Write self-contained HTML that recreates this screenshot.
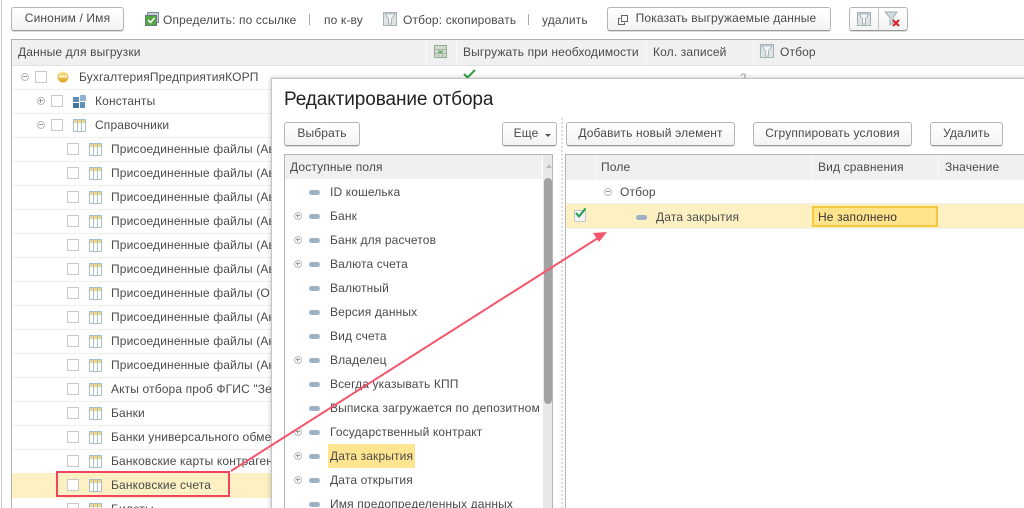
<!DOCTYPE html>
<html lang="ru"><head><meta charset="utf-8"><title>Редактирование отбора</title>
<style>
html,body{margin:0;padding:0;background:#fff}
#p{position:relative;width:1024px;height:508px;overflow:hidden;background:#fff;font:12px/16px "Liberation Sans",sans-serif;letter-spacing:.14px;color:#4a4a4a;filter:blur(.3px)}
#p div,#p svg{position:absolute}
.t{white-space:nowrap;overflow:hidden}
.b{box-sizing:border-box;border:1px solid #b5b5b5;border-bottom:1px solid #989898;border-radius:3px;background:linear-gradient(#fff,#f3f3f3);text-align:center;height:24px;line-height:21px;white-space:nowrap;box-shadow:0 1px 0 #ddd}
.l{height:1px;background:#eeeeee}
.h{background:#f0f0f0}
.v{width:1px;background:#fafafa}
.c{box-sizing:border-box;width:12px;height:12px;border:1px solid #c8c8c8;background:#fff}
.e{box-sizing:border-box;width:8px;height:8px;border:1px solid #bbb;border-radius:50%;background:#fff;text-align:center}
.e.m:after{content:"";position:absolute;left:1px;top:2px;width:4px;height:1px;background:#999}
.e.pl:after{content:"";position:absolute;left:1px;top:2px;width:4px;height:1px;background:#999}
.e.pl:before{content:"";position:absolute;left:2px;top:1px;width:1px;height:4px;background:#999}
.d{width:11px;height:5px;margin-left:-1px;border-radius:2.500px;background:#9db2c5}
</style></head><body><div id="p">
<svg width="0" height="0" style="left:0;top:0"><defs>
<g id="tb"><rect x=".5" y=".5" width="12" height="12" fill="#fff" stroke="#a9bcc7"/><rect x="1" y="1" width="11" height="3" fill="#ecd98a"/><path d="M4.500 1v11M8.500 1v11" stroke="#a9bcc7"/></g>
<g id="fl"><rect x=".5" y=".5" width="13" height="13" fill="#dfe4e6" stroke="#a5b0b5"/><path d="M2 2h10L8.500 7v5h-3V7z" fill="#f4f4f4" stroke="#a9b5ba"/></g>
</defs></svg>

<div style="left:1px;top:0;width:1px;height:508px;background:#c8c8c8"></div>

<!-- toolbar -->
<div class="b" style="left:11px;top:7px;width:113px">Синоним / Имя</div>
<svg style="left:145px;top:12px" width="14" height="14"><rect x="2.500" y=".5" width="11" height="10" fill="#c3ced1" stroke="#7f9298"/><rect x=".5" y="3.500" width="11" height="10" fill="#57a844" stroke="#61797f"/><path d="M3 8l2.500 2.500L9.500 6" fill="none" stroke="#fff" stroke-width="1.500"/></svg>
<div class="t" style="left:163px;top:12px">Определить: по ссылке</div>
<div style="left:309px;top:14px;width:1px;height:11px;background:#a8a8a8"></div>
<div class="t" style="left:324px;top:12px">по к-ву</div>
<svg style="left:383px;top:12px" width="14" height="14"><use href="#fl"/></svg>
<div class="t" style="left:403px;top:12px">Отбор: скопировать</div>
<div style="left:528px;top:14px;width:1px;height:11px;background:#a8a8a8"></div>
<div class="t" style="left:542px;top:12px">удалить</div>
<div class="b" style="left:607px;top:7px;width:224px;padding-left:14px">Показать выгружаемые данные</div>
<svg style="left:617px;top:14px" width="12" height="12"><rect x="4.500" y="1.500" width="6" height="6" fill="none" stroke="#666"/><path d="M3.500 4.500h-2v6h6v-2" fill="none" stroke="#666"/></svg>
<div class="b" style="left:849px;top:7px;width:59px"></div>
<div style="left:878px;top:8px;width:1px;height:22px;background:#c4c4c4"></div>
<svg style="left:857px;top:12px" width="14" height="14"><use href="#fl"/></svg>
<svg style="left:884px;top:11px" width="18" height="16"><path d="M1 1h12L9 6.500V12L6 14V6.500z" fill="#d5dde0" stroke="#9fadb3"/><path d="M9 9l6 6M15 9l-6 6" stroke="#d9262e" stroke-width="2.200"/></svg>

<!-- main table -->
<div style="left:11px;top:39px;width:1013px;height:1px;background:#b0b0b0"></div>
<div style="left:11px;top:39px;width:1px;height:469px;background:#b0b0b0"></div>
<div class="h" style="left:12px;top:40px;width:1012px;height:25px"></div>
<div style="left:12px;top:65px;width:1012px;height:1px;background:#e2e2e2"></div>
<div class="v" style="left:426px;top:40px;height:25px"></div>
<div class="v" style="left:456px;top:40px;height:25px"></div>
<div class="v" style="left:646px;top:40px;height:25px"></div>
<div class="v" style="left:753px;top:40px;height:25px"></div>
<div class="t" style="left:18px;top:44px">Данные для выгрузки</div>
<svg style="left:434px;top:45px" width="13" height="13"><rect x=".5" y=".5" width="12" height="12" fill="#cfdccb" stroke="#9aa89a"/><path d="M1 4.500h11M1 8.500h11M4.500 4v8M8.500 4v8" stroke="#a9b5a8"/><rect x="5" y="6" width="3" height="2" fill="#5aa85a"/></svg>
<div class="t" style="left:463px;top:44px">Выгружать при необходимости</div>
<div class="t" style="left:653px;top:44px">Кол. записей</div>
<svg style="left:760px;top:44px" width="14" height="14"><use href="#fl"/></svg>
<div class="t" style="left:780px;top:44px">Отбор</div>
<div class="t" style="left:740px;top:70px;color:#999">2</div>

<!-- rows -->
<div class="l" style="left:12px;top:89px;width:260px"></div>
<div class="l" style="left:12px;top:113px;width:260px"></div>
<div class="l" style="left:12px;top:137px;width:260px"></div>
<div class="l" style="left:12px;top:161px;width:260px"></div>
<div class="l" style="left:12px;top:185px;width:260px"></div>
<div class="l" style="left:12px;top:209px;width:260px"></div>
<div class="l" style="left:12px;top:233px;width:260px"></div>
<div class="l" style="left:12px;top:257px;width:260px"></div>
<div class="l" style="left:12px;top:281px;width:260px"></div>
<div class="l" style="left:12px;top:305px;width:260px"></div>
<div class="l" style="left:12px;top:329px;width:260px"></div>
<div class="l" style="left:12px;top:353px;width:260px"></div>
<div class="l" style="left:12px;top:377px;width:260px"></div>
<div class="l" style="left:12px;top:401px;width:260px"></div>
<div class="l" style="left:12px;top:425px;width:260px"></div>
<div class="l" style="left:12px;top:449px;width:260px"></div>
<div style="left:12px;top:473px;width:260px;height:25px;background:#fdf1c4"></div>

<div class="e m" style="left:21px;top:73px"></div>
<div class="c" style="left:35px;top:71px"></div>
<svg style="left:57px;top:71px" width="12" height="12"><defs><linearGradient id="g" x1="0" y1="0" x2="0" y2="1"><stop offset="0" stop-color="#f8e89a"/><stop offset="1" stop-color="#d9a31c"/></linearGradient></defs><circle cx="6" cy="6" r="5.500" fill="url(#g)"/><rect x="2" y="4.500" width="8" height="2" fill="#fbf3c6"/></svg>
<div class="t" style="left:79px;top:69px">БухгалтерияПредприятияКОРП</div>

<div class="e pl" style="left:37px;top:97px"></div>
<div class="c" style="left:51px;top:95px"></div>
<svg style="left:73px;top:95px" width="13" height="13"><rect x="0" y="2" width="6" height="5" fill="#5d8fb8"/><rect x="7" y="0" width="6" height="6" fill="#8fb5d2"/><rect x="0" y="8" width="6" height="5" fill="#3f75a3"/><rect x="7" y="7" width="5" height="6" fill="#5d8fb8"/></svg>
<div class="t" style="left:95px;top:93px">Константы</div>

<div class="e m" style="left:37px;top:121px"></div>
<div class="c" style="left:51px;top:119px"></div>
<svg style="left:73px;top:119px" width="13" height="13"><use href="#tb"/></svg>
<div class="t" style="left:95px;top:117px">Справочники</div>

<div class="c" style="left:67px;top:143px"></div><svg style="left:89px;top:143px" width="13" height="13"><use href="#tb"/></svg><div class="t" style="left:111px;top:141px;width:160px">Присоединенные файлы (Ав</div>
<div class="c" style="left:67px;top:167px"></div><svg style="left:89px;top:167px" width="13" height="13"><use href="#tb"/></svg><div class="t" style="left:111px;top:165px;width:160px">Присоединенные файлы (Ав</div>
<div class="c" style="left:67px;top:191px"></div><svg style="left:89px;top:191px" width="13" height="13"><use href="#tb"/></svg><div class="t" style="left:111px;top:189px;width:160px">Присоединенные файлы (Ав</div>
<div class="c" style="left:67px;top:215px"></div><svg style="left:89px;top:215px" width="13" height="13"><use href="#tb"/></svg><div class="t" style="left:111px;top:213px;width:160px">Присоединенные файлы (Ав</div>
<div class="c" style="left:67px;top:239px"></div><svg style="left:89px;top:239px" width="13" height="13"><use href="#tb"/></svg><div class="t" style="left:111px;top:237px;width:160px">Присоединенные файлы (Ав</div>
<div class="c" style="left:67px;top:263px"></div><svg style="left:89px;top:263px" width="13" height="13"><use href="#tb"/></svg><div class="t" style="left:111px;top:261px;width:160px">Присоединенные файлы (Ав</div>
<div class="c" style="left:67px;top:287px"></div><svg style="left:89px;top:287px" width="13" height="13"><use href="#tb"/></svg><div class="t" style="left:111px;top:285px;width:160px">Присоединенные файлы (О</div>
<div class="c" style="left:67px;top:311px"></div><svg style="left:89px;top:311px" width="13" height="13"><use href="#tb"/></svg><div class="t" style="left:111px;top:309px;width:160px">Присоединенные файлы (Ак</div>
<div class="c" style="left:67px;top:335px"></div><svg style="left:89px;top:335px" width="13" height="13"><use href="#tb"/></svg><div class="t" style="left:111px;top:333px;width:160px">Присоединенные файлы (Ак</div>
<div class="c" style="left:67px;top:359px"></div><svg style="left:89px;top:359px" width="13" height="13"><use href="#tb"/></svg><div class="t" style="left:111px;top:357px;width:160px">Присоединенные файлы (Ак</div>
<div class="c" style="left:67px;top:383px"></div><svg style="left:89px;top:383px" width="13" height="13"><use href="#tb"/></svg><div class="t" style="left:111px;top:381px;width:160px">Акты отбора проб ФГИС "Зе</div>
<div class="c" style="left:67px;top:407px"></div><svg style="left:89px;top:407px" width="13" height="13"><use href="#tb"/></svg><div class="t" style="left:111px;top:405px;width:160px">Банки</div>
<div class="c" style="left:67px;top:431px"></div><svg style="left:89px;top:431px" width="13" height="13"><use href="#tb"/></svg><div class="t" style="left:111px;top:429px;width:160px">Банки универсального обме</div>
<div class="c" style="left:67px;top:455px"></div><svg style="left:89px;top:455px" width="13" height="13"><use href="#tb"/></svg><div class="t" style="left:111px;top:453px;width:160px">Банковские карты контраген</div>
<div class="c" style="left:67px;top:479px"></div><svg style="left:89px;top:479px" width="13" height="13"><use href="#tb"/></svg><div class="t" style="left:111px;top:477px;width:160px">Банковские счета</div>
<div class="c" style="left:67px;top:503px"></div><svg style="left:89px;top:503px" width="13" height="13"><use href="#tb"/></svg><div class="t" style="left:111px;top:501px;width:160px">Билеты</div>

<svg style="left:463px;top:69px" width="14" height="10"><path d="M1 5l3.500 3.500L12 1" fill="none" stroke="#2ea043" stroke-width="2"/></svg>

<!-- dialog -->
<div style="left:271px;top:78px;width:760px;height:440px;background:#fff;border:1px solid #c4c4c4;box-sizing:border-box;box-shadow:0 0 5px rgba(0,0,0,.25)"></div>
<div class="t" style="left:284px;top:88px;font-size:19px;line-height:24px;letter-spacing:-.1px;color:#222">Редактирование отбора</div>

<div class="b" style="left:284px;top:122px;width:76px">Выбрать</div>
<div class="b" style="left:502px;top:122px;width:55px;padding-right:7px">Еще</div>
<div style="left:545px;top:134px;width:0;height:0;border:3px solid transparent;border-top:3px solid #555"></div>
<div style="left:561px;top:118px;width:0;height:390px;border-left:2px dotted #ddd"></div>
<div class="b" style="left:566px;top:122px;width:169px">Добавить новый элемент</div>
<div class="b" style="left:753px;top:122px;width:159px">Сгруппировать условия</div>
<div class="b" style="left:930px;top:122px;width:73px">Удалить</div>

<!-- left list -->
<div style="left:284px;top:154px;width:269px;height:360px;box-sizing:border-box;border:1px solid #b5b5b5"></div>
<div class="h" style="left:285px;top:155px;width:257px;height:24px"></div>
<div class="t" style="left:290px;top:159px">Доступные поля</div>
<div style="left:543px;top:155px;width:9px;height:353px;background:#e8e8e8"></div>
<div style="left:546px;top:164px;width:0;height:0;border:3px solid transparent;border-bottom:4px solid #bbb;border-top:0"></div>
<div style="left:544px;top:178px;width:8px;height:226px;border-radius:4px;background:#a2a2a2"></div>

<div class="d" style="left:310px;top:190px"></div><div class="t" style="left:330px;top:184px">ID кошелька</div>
<div class="e pl" style="left:294px;top:212px"></div><div class="d" style="left:310px;top:214px"></div><div class="t" style="left:330px;top:208px">Банк</div>
<div class="e pl" style="left:294px;top:236px"></div><div class="d" style="left:310px;top:238px"></div><div class="t" style="left:330px;top:232px">Банк для расчетов</div>
<div class="e pl" style="left:294px;top:260px"></div><div class="d" style="left:310px;top:262px"></div><div class="t" style="left:330px;top:256px">Валюта счета</div>
<div class="d" style="left:310px;top:286px"></div><div class="t" style="left:330px;top:280px">Валютный</div>
<div class="d" style="left:310px;top:310px"></div><div class="t" style="left:330px;top:304px">Версия данных</div>
<div class="d" style="left:310px;top:334px"></div><div class="t" style="left:330px;top:328px">Вид счета</div>
<div class="e pl" style="left:294px;top:356px"></div><div class="d" style="left:310px;top:358px"></div><div class="t" style="left:330px;top:352px">Владелец</div>
<div class="d" style="left:310px;top:382px"></div><div class="t" style="left:330px;top:376px">Всегда указывать КПП</div>
<div class="d" style="left:310px;top:406px"></div><div class="t" style="left:330px;top:400px;width:212px">Выписка загружается по депозитном</div>
<div class="e pl" style="left:294px;top:428px"></div><div class="d" style="left:310px;top:430px"></div><div class="t" style="left:330px;top:424px">Государственный контракт</div>
<div style="left:328px;top:444px;width:87px;height:24px;background:#ffe58f"></div>
<div class="e pl" style="left:294px;top:452px"></div><div class="d" style="left:310px;top:454px"></div><div class="t" style="left:330px;top:448px">Дата закрытия</div>
<div class="e pl" style="left:294px;top:476px"></div><div class="d" style="left:310px;top:478px"></div><div class="t" style="left:330px;top:472px">Дата открытия</div>
<div class="d" style="left:310px;top:502px"></div><div class="t" style="left:330px;top:496px">Имя предопределенных данных</div>

<!-- right table -->
<div style="left:565px;top:154px;width:470px;height:360px;box-sizing:border-box;border:1px solid #b5b5b5"></div>
<div class="h" style="left:566px;top:155px;width:458px;height:25px"></div>
<div class="v" style="left:595px;top:155px;height:25px"></div>
<div class="v" style="left:811px;top:155px;height:25px"></div>
<div class="v" style="left:938px;top:155px;height:25px"></div>
<div class="t" style="left:601px;top:159px">Поле</div>
<div class="t" style="left:818px;top:159px">Вид сравнения</div>
<div class="t" style="left:945px;top:159px">Значение</div>
<div class="e m" style="left:604px;top:188px"></div>
<div class="t" style="left:620px;top:184px">Отбор</div>
<div style="left:566px;top:204px;width:458px;height:24px;background:#fdf1c4"></div>
<div style="left:566px;top:203px;width:458px;height:1px;background:#f0f0f0"></div>
<div style="left:566px;top:228px;width:458px;height:1px;background:#f0f0f0"></div>
<div class="c" style="left:574px;top:210px;background:#f4f4f4"></div>
<svg style="left:573px;top:207px" width="15" height="12"><path d="M3 6l3 3.500L12.500 1.500" fill="none" stroke="#1f9e4a" stroke-width="2"/></svg>
<div class="d" style="left:637px;top:215px"></div>
<div class="t" style="left:656px;top:209px">Дата закрытия</div>
<div style="left:812px;top:206px;width:126px;height:21px;box-sizing:border-box;border:2px solid #f5c842;background:#ffe48c"></div>
<div class="t" style="left:818px;top:209px;color:#333">Не заполнено</div>

<!-- annotation -->
<svg style="left:0;top:0" width="1024" height="508" fill="none"><rect x="57" y="472" width="172" height="24" stroke="#f0455f" stroke-width="2"/><path d="M231 471L598 238" stroke="#f4566e" stroke-width="2"/><path d="M607 232L593 233 599 242z" fill="#f4566e"/></svg>
</div></body></html>
